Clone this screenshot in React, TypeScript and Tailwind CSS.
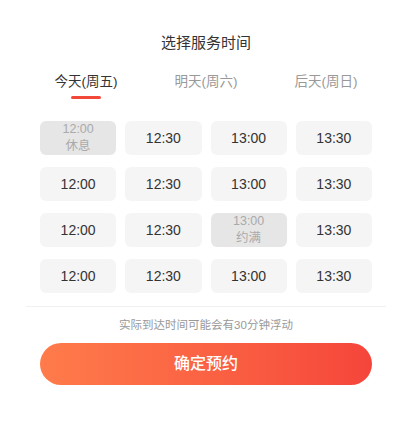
import { useState } from 'react'

type Slot = { time: string; note?: string }

const days = ['今天(周五)', '明天(周六)', '后天(周日)']

const rows: Slot[][] = [
  [{ time: '12:00', note: '休息' }, { time: '12:30' }, { time: '13:00' }, { time: '13:30' }],
  [{ time: '12:00' }, { time: '12:30' }, { time: '13:00' }, { time: '13:30' }],
  [{ time: '12:00' }, { time: '12:30' }, { time: '13:00', note: '约满' }, { time: '13:30' }],
  [{ time: '12:00' }, { time: '12:30' }, { time: '13:00' }, { time: '13:30' }],
]

export default function App() {
  const [day, setDay] = useState(0)

  return (
    <div
      className="h-[426px] w-[412px] bg-white pt-[31px]"
      style={{ fontFamily: '"Liberation Sans", "Noto Sans CJK SC", sans-serif' }}
    >
      <h1 className="text-center text-[15px] leading-6 text-[#333333]">选择服务时间</h1>

      <div className="mx-[26px] mt-[17px] grid grid-cols-3">
        {days.map((label, i) => (
          <button key={label} onClick={() => setDay(i)} className="flex flex-col items-center">
            <span className={`text-[13.5px] leading-5 ${day === i ? 'text-[#333333]' : 'text-[#999999]'}`}>{label}</span>
            <span className={`mt-1 h-[3px] w-[30px] rounded-full ${day === i ? 'bg-[#f2483a]' : 'bg-transparent'}`} />
          </button>
        ))}
      </div>

      <div className="mx-10 mt-[22px] grid grid-cols-4 gap-x-[9px] gap-y-3">
        {rows.flat().map((slot, i) =>
          slot.note ? (
            <div key={i} className="flex h-[34px] flex-col items-center justify-center rounded-md bg-[#e6e6e6] text-[12.5px] leading-[17px] text-[#aaaaaa]">
              <span>{slot.time}</span>
              <span>{slot.note}</span>
            </div>
          ) : (
            <div key={i} className="flex h-[34px] items-center justify-center rounded-md bg-[#f5f5f5] text-[14px] text-[#333333]">
              {slot.time}
            </div>
          )
        )}
      </div>

      <div className="mx-[26px] mt-[13px] h-px bg-[#f0f0f0]" />

      <p className="mt-[9px] text-center text-[11.5px] leading-[18px] text-[#999999]">实际到达时间可能会有30分钟浮动</p>

      <button className="mx-10 mt-[9px] flex h-[42px] w-[332px] items-center justify-center rounded-full bg-gradient-to-r from-[#ff7b4b] to-[#f5453b] text-[16px] font-medium text-white">
        确定预约
      </button>
    </div>
  )
}
